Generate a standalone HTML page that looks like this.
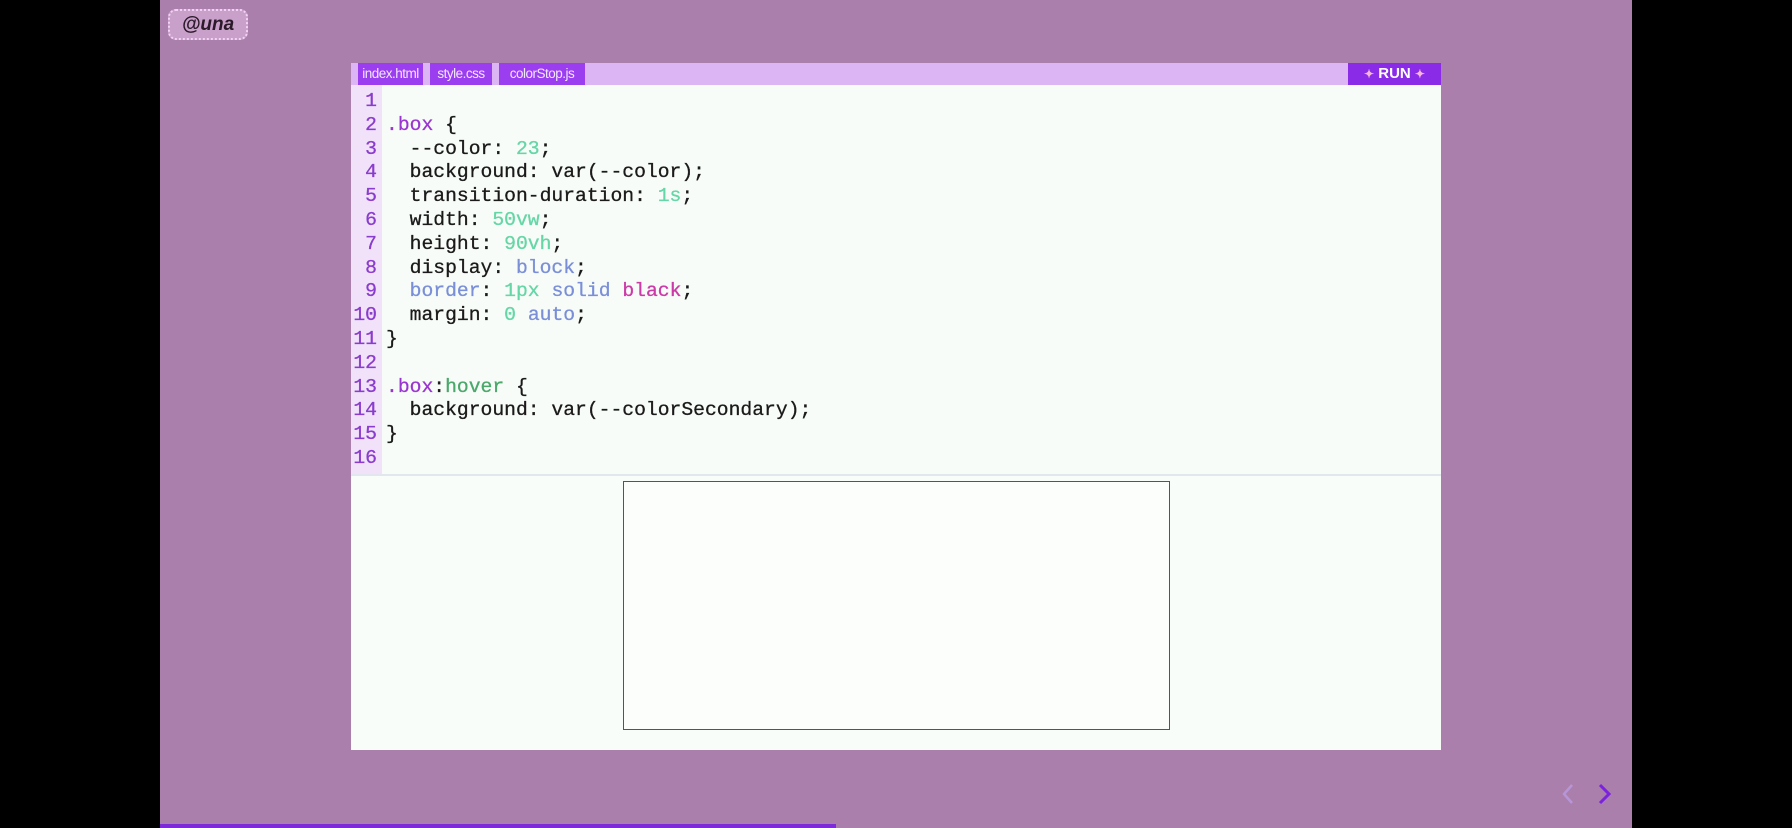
<!DOCTYPE html>
<html><head><meta charset="utf-8"><style>
html,body{margin:0;padding:0;width:1792px;height:828px;background:#000;overflow:hidden}
.stage{position:absolute;left:160px;top:0;width:1472px;height:828px;background:#ab7fab}
.logo{position:absolute;left:168px;top:9px;width:76px;height:27px;border:2px dotted #f3d3f5;border-radius:8px;background:#c9a0c9;font:italic bold 19px "Liberation Sans",sans-serif;color:#2a1a2a;text-align:center;line-height:27px}
.tabbar{position:absolute;left:351px;top:63px;width:1090px;height:22px;background:#dcb6f4}
.tab{position:absolute;top:0;height:22px;background:#9a3ef0;color:#f3e6ff;font:13.5px "Liberation Sans",sans-serif;line-height:22px;text-align:center;letter-spacing:-0.5px}
.run{position:absolute;left:1348px;top:63px;width:93px;height:22px;background:#8a2be8;color:#fff;font:bold 15px "Liberation Sans",sans-serif;line-height:22px;text-align:center}
.run span{color:#f7b7d8;font-size:12px}
.code{position:absolute;left:351px;top:85px;width:1090px;height:389px;background:#f8fcf8;overflow:hidden}
.gutter{position:absolute;left:0;top:0;width:31px;height:389px;background:#f1e2fa}
.lines{position:absolute;left:0;top:5px;font:19.7px "Liberation Mono",monospace;line-height:23.8px;white-space:pre;color:#1a1a1a;-webkit-text-stroke:0.3px currentColor}
.ln{display:inline-block;width:26px;text-align:right;color:#8a3ccc;margin-right:9px}
.sep{position:absolute;left:351px;top:474px;width:1090px;height:2px;background:#e2e6ee}
.preview{position:absolute;left:351px;top:476px;width:1090px;height:274px;background:#f9fdf9}
.box{position:absolute;left:623px;top:481px;width:545px;height:247px;border:1px solid #555;background:#fbfefb}
.g{color:#66d6a6}.b{color:#7a8fd8}.m{color:#cc3aa8}.p{color:#9a36d0}.h{color:#4aa86a}
.bar{position:absolute;left:160px;top:824px;width:676px;height:4px;background:#7d2bd8}
</style></head><body>
<div class="stage"></div>
<div class="logo">@una</div>
<div class="tabbar">
<div class="tab" style="left:7px;width:65px">index.html</div>
<div class="tab" style="left:79px;width:62px">style.css</div>
<div class="tab" style="left:148px;width:86px">colorStop.js</div>
</div>
<div class="run"><span>✦</span> RUN <span>✦</span></div>
<div class="code"><div class="gutter"></div>
<div class="lines"><span class="ln">1</span>
<span class="ln">2</span><span class="p">.box</span> {
<span class="ln">3</span>  --color: <span class="g">23</span>;
<span class="ln">4</span>  background: var(--color);
<span class="ln">5</span>  transition-duration: <span class="g">1s</span>;
<span class="ln">6</span>  width: <span class="g">50vw</span>;
<span class="ln">7</span>  height: <span class="g">90vh</span>;
<span class="ln">8</span>  display: <span class="b">block</span>;
<span class="ln">9</span>  <span class="b">border</span>: <span class="g">1px</span> <span class="b">solid</span> <span class="m">black</span>;
<span class="ln">10</span>  margin: <span class="g">0</span> <span class="b">auto</span>;
<span class="ln">11</span>}
<span class="ln">12</span>
<span class="ln">13</span><span class="p">.box</span>:<span class="h">hover</span> {
<span class="ln">14</span>  background: var(--colorSecondary);
<span class="ln">15</span>}
<span class="ln">16</span></div></div>
<div class="sep"></div>
<div class="preview"></div>
<div class="box"></div>
<svg style="position:absolute;left:1556px;top:780px" width="60" height="30" viewBox="0 0 60 30">
<path d="M16 5 L8 14 L16 23" fill="none" stroke="#b796d8" stroke-width="2.5"/>
<path d="M44 5 L53 14 L44 23" fill="none" stroke="#7a22e0" stroke-width="3"/>
</svg>
<div class="bar"></div>
</body></html>
